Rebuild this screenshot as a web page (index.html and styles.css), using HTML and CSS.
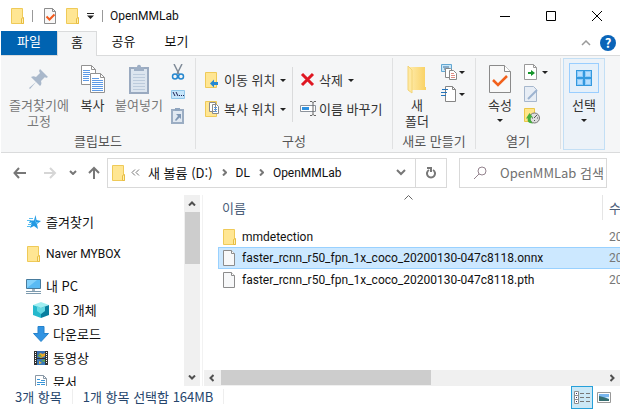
FILE: index.html
```html
<!DOCTYPE html>
<html lang="ko">
<head>
<meta charset="utf-8">
<meta name="viewport" content="width=device-width, initial-scale=1">
<title>OpenMMLab</title>
<link rel="stylesheet" href="styles.css">
</head>
<body>
<svg class="sprite" aria-hidden="true">
  <symbol id="folder" viewBox="0 0 14 16"><path d="M.5.5h11v10h1v5H.5z" fill="#ffe693" stroke="#efca58"/><path d="M10.500 15.500v-5l2-1v6z" fill="#fff0b0" stroke="#e8bd42"/></symbol>
  <symbol id="page" viewBox="0 0 12 16"><path d="M.5.5h8l3 3v12H.5z" fill="#f7f8f9" stroke="#8c8c8c"/><path d="M8.500.5v3h3" fill="#fff" stroke="#8c8c8c"/></symbol>
  <symbol id="caret" viewBox="0 0 6 3"><path d="M0 0h6L3 3z" fill="#222"/></symbol>
  <symbol id="up" viewBox="0 0 8 5"><path d="M1 4.500l3-3 3 3" fill="none" stroke="currentColor" stroke-width="2"/></symbol>
</svg>

<header class="titlebar">
  <svg class="icon-folder" aria-hidden="true"><use href="#folder"/></svg>
  <span class="bar bar-first"></span>
  <button class="quick" aria-label="속성"><svg width="12" height="16" viewBox="0 0 12 16"><path d="M.5.500h8l3 3v12H.5z" fill="#f8f8f8" stroke="#8c8c8c"/><path d="M8.500.500v3h3" fill="none" stroke="#8c8c8c"/><path d="M2.500 8.500l3 3 5-5" fill="none" stroke="#f25a1d" stroke-width="2"/></svg></button>
  <button class="quick" aria-label="새 폴더"><svg class="icon-folder"><use href="#folder"/></svg></button>
  <button class="quick quick-menu" aria-label="빠른 실행 도구 모음"><svg width="7" height="6" viewBox="0 0 7 6"><path d="M0 0h7v1H0zM0 2.500h7L3.500 6z" fill="#222"/></svg></button>
  <span class="bar"></span>
  <h1 class="title">OpenMMLab</h1>
  <div class="controls">
    <button class="control" aria-label="최소화"><svg width="10" height="10"><path d="M0 5.500h10" stroke="#000"/></svg></button>
    <button class="control" aria-label="최대화"><svg width="10" height="10"><path d="M.5.500h9v9h-9z" fill="none" stroke="#000"/></svg></button>
    <button class="control" aria-label="닫기"><svg width="10" height="10"><path d="M0 0l10 10M10 0L0 10" stroke="#000"/></svg></button>
  </div>
</header>

<nav class="tabs" aria-label="리본 탭">
  <button class="tab tab-file">파일</button>
  <button class="tab tab-active">홈</button>
  <button class="tab">공유</button>
  <button class="tab">보기</button>
  <div class="tabs-end">
    <button class="plain" aria-label="리본 최소화"><svg width="10" height="6"><path d="M1 5l4-4 4 4" fill="none" stroke="#9a9a9a" stroke-width="1.500"/></svg></button>
    <button class="help" aria-label="도움말">?</button>
  </div>
</nav>

<section class="ribbon" aria-label="홈">
  <div class="group group-clipboard">
    <div class="tools">
      <button class="big big-pin" disabled><svg width="20" height="30" viewBox="0 0 20 30"><path d="M11 5l8 8-2 1-1-1-4 4c1 3 0 4-1 5l-4-4-6 7-1-1 7-6-5-5c2-1 3-1 5 0l4-4-1-2z" fill="#a9b8cb"/></svg><span>즐겨찾기에<br>고정</span></button>
      <button class="big big-copy"><svg width="26" height="30" viewBox="0 0 26 30"><g fill="#fff" stroke="#929292"><path d="M1.500 1.500h10l4 4v15h-14z"/><path d="M10.500 9.500h10l4 4v15h-14z"/></g><path d="M11.500 1.500v4h4M20.500 9.500v4h4" fill="none" stroke="#929292"/><path d="M3 6.500h7M3 8.500h7M3 10.500h7M3 12.500h6M3 14.500h6M3 16.500h6M12 14.500h7M12 16.500h11M12 18.500h11M12 20.500h11M12 22.500h11M12 24.500h11M12 26.500h11" stroke="#5d9ae6"/></svg><span>복사</span></button>
      <button class="big big-paste" disabled><svg width="20" height="30" viewBox="0 0 20 30"><path d="M1 4h18v25H1z" fill="#dce5ef" stroke="#9aaac0" stroke-width="2"/><path d="M5 3h3c0-3 4-3 4 0h3v4H5z" fill="#9eafc5"/><path d="M4 10.500h12M4 13.500h12M4 16.500h12M4 19.500h12M4 22.500h12M4 25.500h12" stroke="#bccbdc"/></svg><span>붙여넣기</span></button>
      <div class="mini-list">
        <button class="plain" aria-label="잘라내기"><svg width="14" height="16" viewBox="0 0 14 16"><path d="M3 0l5 10M11 0L6 10" fill="none" stroke="#7f8b98" stroke-width="1.500"/><circle cx="4" cy="12.500" r="2.500" fill="none" stroke="#2587cf" stroke-width="1.500"/><circle cx="10" cy="12.500" r="2.500" fill="none" stroke="#2587cf" stroke-width="1.500"/></svg></button>
        <button class="plain" aria-label="경로 복사"><svg width="16" height="16" viewBox="0 0 16 16"><path d="M1.500 4.500h13v8h-13z" fill="#c5e5fa" stroke="#91c7ea"/><path d="M3 6l2 4M6 6l2 4M9 9.500h1M11 9.500h1M13 9.500h1" stroke="#225" /></svg></button>
        <button class="plain" aria-label="바로 가기 붙여넣기" disabled><svg width="14" height="16" viewBox="0 0 14 16"><path d="M1 2h11v13H1z" fill="#e0e8f1" stroke="#9badc3" stroke-width="2"/><path d="M4 0h5v3H4z" fill="#8fa5bf"/><path d="M5 6h5v5L8.500 9.500 5 13 4 12l3-4z" fill="#7f97b4"/></svg></button>
      </div>
    </div>
    <h2 class="group-name">클립보드</h2>
  </div>

  <div class="group group-organize">
    <div class="tools">
      <div class="row-list row-list-split">
        <button class="small"><svg width="16" height="16" viewBox="0 0 16 16"><path d="M.5.500h11v15H.5z" fill="#ffe693" stroke="#efca58"/><path d="M5 11.500l4-4v2.500h4v3H9v2.500z" fill="#2588d2"/></svg>이동 위치<svg class="icon-caret"><use href="#caret"/></svg></button>
        <button class="small"><svg width="16" height="16" viewBox="0 0 16 16"><path d="M.5.500h11v15H.5z" fill="#ffe693" stroke="#efca58"/><path d="M4.500 1.500h6v9h-6zM7.500 3.500h4l2 2v7h-6z" fill="#fff" stroke="#8b8b8b"/><path d="M9 6.500h3M9 8.500h3M9 10.500h3" stroke="#5997df"/></svg>복사 위치<svg class="icon-caret"><use href="#caret"/></svg></button>
      </div>
      <div class="row-list row-list-right">
        <button class="small"><svg width="16" height="16" viewBox="0 0 16 16"><path d="M2 2l11 11M13 2L2 13" stroke="#df1722" stroke-width="3"/></svg>삭제<svg class="icon-caret"><use href="#caret"/></svg></button>
        <button class="small"><svg width="16" height="16" viewBox="0 0 16 16"><path d="M.5 4.500h15v6H.5z" fill="#fff" stroke="#8b929b"/><path d="M2 6h7v3H2z" fill="#2d91e0"/><path d="M10 .5h2l1 1 1-1h2M10 14.500h2l1-1 1 1h2M13 1v13" fill="none" stroke="#666"/></svg>이름 바꾸기</button>
      </div>
    </div>
    <h2 class="group-name">구성</h2>
  </div>

  <div class="group group-new">
    <div class="tools">
      <button class="big big-folder"><svg width="20" height="30" viewBox="0 0 20 30"><defs><linearGradient id="gold"><stop stop-color="#ffedb0"/><stop offset="1" stop-color="#f9d163"/></linearGradient></defs><path d="M1 3h17v20h1v3H1z" fill="url(#gold)"/><path d="M1 2l4 4v23l-4-3z" fill="#ffe9a2" stroke="#f3d477"/></svg><span>새<br>폴더</span></button>
      <div class="mini-list mini-list-pair">
        <button class="plain mini" aria-label="새 항목"><svg width="16" height="16" viewBox="0 0 16 16"><path d="M.5.500h10v7H.5z" fill="#c9e8fa" stroke="#63a7d2"/><path d="M2 3h6M3 5h5" stroke="#456f96"/><path d="M4.500 4.500h5l2 2v7h-7z" fill="#fff" stroke="#888"/><path d="M8.500 6.500h4l3 3v6h-7z" fill="#fff" stroke="#888"/><path d="M10 9.500h3M10 11.500h4M10 13.500h4" stroke="#df8c83"/></svg><svg class="icon-caret"><use href="#caret"/></svg></button>
        <button class="plain mini" aria-label="빠른 연결"><svg width="16" height="16" viewBox="0 0 16 16"><path d="M4.500.500h7l3 3v12h-10z" fill="#fff" stroke="#858585"/><path d="M11.500.500v3h3" fill="none" stroke="#858585"/><path d="M1 3.500h6M0 6.500h6M0 9.500h5" stroke="#2574bb" stroke-width="1"/></svg><svg class="icon-caret"><use href="#caret"/></svg></button>
      </div>
    </div>
    <h2 class="group-name">새로 만들기</h2>
  </div>

  <div class="group group-open">
    <div class="tools">
      <button class="big big-props"><svg width="22" height="30" viewBox="0 0 22 30"><path d="M.5 1.500h15l6 6v21H.5z" fill="#f8f8f8" stroke="#8a8a8a"/><path d="M15.500 1.500v6h6" fill="#fff" stroke="#8a8a8a"/><path d="M4 16l5 5 9-9" fill="none" stroke="#f2611c" stroke-width="2.500"/></svg><span>속성</span><svg class="icon-caret"><use href="#caret"/></svg></button>
      <div class="mini-list mini-list-open">
        <button class="plain mini" aria-label="열기"><svg width="14" height="16" viewBox="0 0 14 16"><path d="M.5.500h9l3 3v12H.5z" fill="#fff" stroke="#999"/><path d="M9.500.500v3h3" fill="none" stroke="#999"/><path d="M4 8h3V6l4 3-4 3v-2H4z" fill="#16962c"/></svg><svg class="icon-caret"><use href="#caret"/></svg></button>
        <button class="plain" aria-label="편집" disabled><svg width="14" height="16" viewBox="0 0 14 16"><path d="M.5.500h9l3 3v12H.5z" fill="#e7edf5" stroke="#a6b7cd"/><path d="M4 13l9-9" stroke="#9cb3d0" stroke-width="2"/></svg></button>
        <button class="plain" aria-label="히스토리"><svg width="16" height="16" viewBox="0 0 16 16"><path d="M.5.500h10v13H.5z" fill="#ffe58a" stroke="#ebc747"/><circle cx="10.500" cy="10" r="5" fill="#dedede" stroke="#777"/><path d="M10 10l3-3M8 10h1M10.500 13v-1M13 10h1" fill="none" stroke="#555"/><path d="M9 15.500c-5 0-6-3-5-5H2L5.500 5 9 9.500H7c-1 2 0 4 2 6z" fill="#47af3c"/></svg></button>
      </div>
    </div>
    <h2 class="group-name">열기</h2>
  </div>

  <button class="select-group"><span class="select-icon"><svg width="16" height="16" viewBox="0 0 16 16"><path d="M0 0h16v16H0z" fill="#3499de"/><path d="M1 1h6v6H1zM9 1h6v6H9zM1 9h6v6H1zM9 9h6v6H9z" fill="#8fcbfa"/><path d="M2 2h4v4H2zM10 2h4v4h-4zM2 10h4v4H2zM10 10h4v4h-4z" fill="#b9dffd"/></svg></span><span>선택</span><svg class="icon-caret"><use href="#caret"/></svg></button>
</section>

<div class="address">
  <button class="plain nav-back" aria-label="뒤로"><svg width="14" height="12"><path d="M13 6H2M6 1L1.500 6 6 11" fill="none" stroke="#777" stroke-width="2"/></svg></button>
  <button class="plain nav-forward" aria-label="앞으로"><svg width="14" height="12"><path d="M1 6h11M7 1l5 5-5 5" fill="none" stroke="#d6d6d6" stroke-width="2"/></svg></button>
  <button class="plain nav-recent" aria-label="최근 위치"><svg width="8" height="5"><path d="M1 1l3 3 3-3" fill="none" stroke="#777" stroke-width="2"/></svg></button>
  <button class="plain nav-up" aria-label="위로"><svg width="12" height="14"><path d="M6 13V2M1 7l5-5 5 5" fill="none" stroke="#777" stroke-width="2"/></svg></button>
  <div class="path">
    <svg class="icon-folder" aria-hidden="true"><use href="#folder"/></svg>
    <svg class="path-more" width="9" height="7" aria-hidden="true"><path d="M4 .5l-3 3 3 3M8 .5l-3 3 3 3" fill="none" stroke="#777"/></svg>
    <a class="crumb" href="#">새 볼륨 (D:)</a>
    <svg class="path-arrow" width="5" height="7" aria-hidden="true"><path d="M1 .5l3 3-3 3" fill="none" stroke="#777" stroke-width="2"/></svg>
    <a class="crumb latin" href="#">DL</a>
    <svg class="path-arrow" width="5" height="7" aria-hidden="true"><path d="M1 .5l3 3-3 3" fill="none" stroke="#777" stroke-width="2"/></svg>
    <a class="crumb latin" href="#">OpenMMLab</a>
    <button class="plain path-open" aria-label="이전 위치"><svg width="10" height="7"><path d="M1 1l4 4 4-4" fill="none" stroke="#777" stroke-width="2"/></svg></button>
    <button class="refresh" aria-label="새로 고침"><svg width="10" height="12"><path d="M7 3a4 4 0 1 1-4 0" fill="none" stroke="#777" stroke-width="2"/><path d="M1 1h4v4" fill="none" stroke="#777" stroke-width="2"/></svg></button>
  </div>
  <label class="search">
    <svg width="13" height="13" aria-hidden="true"><circle cx="8" cy="5" r="4" fill="none" stroke="#94838e"/><path d="M5 8l-5 5" stroke="#94838e"/></svg>
    <input type="text" placeholder="OpenMMLab 검색" aria-label="OpenMMLab 검색">
  </label>
</div>

<main class="panes">
  <aside class="sidebar">
    <ul class="tree">
      <li class="node gap"><svg width="16" height="16" viewBox="0 0 16 16"><path d="M9.500 1l1 5 4.500 1-4 3 1 5-4-3-4 2 1.500-4L3 6.500h5z" fill="#2299e3"/><path d="M9 3v5h4l-3 2z" fill="#6bc5f5"/><path d="M3 4.500h4M1 6.500h4M3 8.500h3M2 10.500h3M1 12.500h4" stroke="#58bdf0"/></svg>즐겨찾기</li>
      <li class="node gap latin"><svg class="icon-folder"><use href="#folder"/></svg>Naver MYBOX</li>
      <li class="node"><svg class="icon-pc" width="17" height="16" viewBox="0 0 17 16"><path d="M1.500 1.500h14v9h-14z" fill="#59baf4" stroke="#477b9d"/><path d="M2 10L12 2H2z" fill="#83d1fb"/><path d="M7 11h3v2H7z" fill="#a5b5c1"/><path d="M1 13.500h15M1 15.500h15" stroke="#7c9aae"/></svg>내 PC</li>
      <li class="node child"><svg width="16" height="16" viewBox="0 0 16 16"><path d="M0 3l8-3 8 3-8 3z" fill="#a0eef1"/><path d="M0 3l8 3v10l-8-3z" fill="#25b9cd"/><path d="M16 3L8 6v10l8-3z" fill="#087f9f"/><path d="M4 4l4 2 4-2v5l-4 3-4-3z" fill="#65d9e3"/></svg>3D 개체</li>
      <li class="node child"><svg width="16" height="16" viewBox="0 0 16 16"><path d="M5 .5h6v7h4.500L8 15.500.5 7.500H5z" fill="#3294e2" stroke="#2582cc"/></svg>다운로드</li>
      <li class="node child"><svg width="16" height="16" viewBox="0 0 16 16"><path d="M1 1h14v14H1z" fill="#333"/><path d="M4 1h8v7H4z" fill="#386fb4"/><path d="M4 9h8v6H4z" fill="#3979ba"/><path d="M7 3l3 1 2-1v3l-4 2-3-2z" fill="#e8a92d"/><path d="M4 6l3-2 2 3zM8 11l4-2v3z" fill="#5fa64b"/><path d="M6 11l3 2-3 1z" fill="#edb941"/><path d="M2.500 2v12M13.500 2v12" stroke="#fff" stroke-dasharray="1 1"/></svg>동영상</li>
      <li class="node child"><svg width="16" height="16" viewBox="0 0 16 16"><path d="M2.500 1.500h8l3 3v10h-11z" fill="#fff" stroke="#8998a6"/><path d="M10.500 1.500v3h3" fill="none" stroke="#8998a6"/><path d="M4 5.500h3M8 6.500h4M4 8.500h8M4 10.500h3M8 10.500h4M4 12.500h8" stroke="#3995d8"/></svg>문서</li>
    </ul>
    <div class="vscroll">
      <svg class="scroll-arrow"><use href="#up"/></svg>
      <div class="vthumb"></div>
      <svg class="scroll-arrow flip"><use href="#up"/></svg>
    </div>
  </aside>

  <section class="files">
    <svg class="sort" width="9" height="5" aria-hidden="true"><path d="M.5 4.500l4-4 4 4" fill="none" stroke="#666"/></svg>
    <div class="list">
      <table class="table">
        <thead><tr><th class="name">이름</th><th class="date">수</th></tr></thead>
        <tbody>
          <tr><td><span class="file"><svg class="icon-folder"><use href="#folder"/></svg>mmdetection</span></td><td class="date">20</td></tr>
          <tr class="selected"><td><span class="file"><svg class="icon-page"><use href="#page"/></svg>faster_rcnn_r50_fpn_1x_coco_20200130-047c8118.onnx</span></td><td class="date">20</td></tr>
          <tr><td><span class="file"><svg class="icon-page"><use href="#page"/></svg>faster_rcnn_r50_fpn_1x_coco_20200130-047c8118.pth</span></td><td class="date">20</td></tr>
        </tbody>
      </table>
    </div>
    <div class="hscroll">
      <svg width="5" height="8"><path d="M4.500 1l-3 3 3 3" fill="none" stroke="#505050" stroke-width="2"/></svg>
      <div class="htrack"><div class="hthumb"></div></div>
      <svg width="5" height="8"><path d="M.5 1l3 3-3 3" fill="none" stroke="#505050" stroke-width="2"/></svg>
    </div>
  </section>
</main>

<footer class="status">
  <span class="status-item">3개 항목</span>
  <span class="status-item status-selected">1개 항목 선택함 164MB</span>
  <div class="views">
    <button class="view view-active" aria-label="자세히"><svg width="17" height="14"><path d="M.5.500h4v12h-4zM.5 4.500h4M.5 8.500h4" fill="#fff" stroke="#8e8e8e"/><path d="M2 2.500h1M2 6.500h1M2 10.500h1" stroke="#337"/><path d="M6 2.500h4M12 2.500h4M6 6.500h4M12 6.500h4M6 10.500h4M12 10.500h4" stroke="#777"/></svg></button>
    <button class="view" aria-label="큰 아이콘"><svg width="14" height="11"><path d="M.5.500h13v10H.5z" fill="#fff" stroke="#999"/><path d="M2 2h10v7H2z" fill="#79b6ef"/><path d="M2 4l4 1 6 2v2H2z" fill="#356e70"/><path d="M8 5h4v2z" fill="#d7effb"/></svg></button>
  </div>
</footer>
</body>
</html>
```
FILE: styles.css
```css
* { box-sizing: border-box; }

body {
  display: flex;
  flex-direction: column;
  height: 100vh;
  margin: 0;
  padding-left: 1px;
  overflow: hidden;
  background: #fff;
  color: #111;
  font: 13px/16px "Noto Sans CJK KR", sans-serif;
}

button, input { font: inherit; color: inherit; }

button {
  display: flex;
  align-items: center;
  justify-content: center;
  padding: 0;
  border: 0;
  background: none;
  white-space: nowrap;
}

svg { display: block; flex: none; }
h1, h2, ul { margin: 0; padding: 0; font-size: 13px; font-weight: inherit; }

.sprite { position: absolute; width: 0; height: 0; }
.icon-folder { width: 14px; height: 16px; }
.icon-page { width: 12px; height: 16px; }
.icon-caret { width: 6px; height: 3px; }

.title, .latin, .table td { font-family: Roboto, "Noto Sans CJK KR", sans-serif; font-size: 12px; }

/* Title bar */
.titlebar { display: flex; align-items: center; flex: none; height: 31px; padding-left: 10px; }
.bar { width: 1px; height: 12px; background: #999; }
.bar-first { margin: 0 11px 0 7px; }
.quick { margin-right: 10px; }
.quick-menu { margin: 0 8px 0 -3px; }
.title { margin-left: 7px; }
.controls { display: flex; align-self: stretch; margin-left: auto; }
.control { width: 46px; }

/* Ribbon tabs */
.tabs { display: flex; flex: none; height: 25px; border-bottom: 1px solid #dadbdc; }
.tab { width: 53px; padding-bottom: 4px; }
.tab-file { width: 56px; background: #0063b1; color: #fff; }
.tab-active { width: 40px; margin-bottom: -1px; border: 1px solid #dadbdc; border-bottom: 0; background: #f5f6f7; }
.tabs-end { display: flex; align-items: center; gap: 9px; margin-left: auto; padding-right: 4px; }
.help { width: 16px; height: 16px; border-radius: 50%; background: #0a64b8; color: #fff; font-weight: 700; }

/* Ribbon */
.ribbon { display: flex; flex: none; height: 97px; padding: 2px 0; border-bottom: 1px solid #dadbdc; background: #f5f6f7; color: #333; }
.group { display: flex; flex-direction: column; flex: none; height: 91px; border-right: 1px solid #e0e1e2; }
.group-clipboard { width: 195px; }
.group-organize { width: 197px; }
.group-new { width: 83px; }
.group-open { width: 85px; }
.group-name { height: 16px; color: #555; text-align: center; white-space: nowrap; }
.tools { display: flex; flex: 1; padding-top: 6px; }
.big { flex-direction: column; justify-content: flex-start; flex: none; }
.big span { margin-top: 3px; line-height: 16px; }
.big .icon-caret { margin-top: 6px; }
.big:disabled { color: #777; }
.big-pin { width: 76px; }
.big-copy { width: 31px; }
.big-paste { width: 62px; }
.mini-list { display: flex; flex-direction: column; align-items: center; gap: 6px; width: 16px; }
.mini-list-pair, .mini-list-open { align-items: flex-start; width: 24px; }
.mini { gap: 2px; }
.mini-list-open .mini { gap: 4px; }
.big-folder { width: 48px; }
.big-props { width: 48px; }
.row-list { display: flex; flex-direction: column; gap: 13px; height: 55px; margin-top: 3px; padding: 5px 0 0 9px; }
.row-list-split { width: 97px; border-right: 1px solid #dadbdc; }
.row-list-right { padding-left: 7px; }
.small { justify-content: flex-start; gap: 3px; }
.small .icon-caret { margin-left: 2px; }
.select-group { flex-direction: column; justify-content: flex-start; width: 42px; height: 92px; margin-left: 2px; padding-top: 4px; border: 1px solid #c3dff5; background: #ecf2f8; }
.select-icon { display: grid; place-items: center; width: 30px; height: 30px; margin-bottom: 4px; border: 1px solid #99ceff; background: #e5f0fa; }
.select-group .icon-caret { margin-top: 6px; }

/* Address bar */
.address { display: flex; align-items: center; flex: none; height: 42px; padding: 0 13px 3px 12px; }
.nav-forward { margin-left: 16px; }
.nav-recent { margin-left: 12px; }
.nav-up { margin-left: 11px; }
.path { display: flex; align-items: center; flex: 1; height: 30px; margin-left: 7px; padding-left: 4px; border: 1px solid #d9d9d9; }
.path-more { margin: 0 8px 0 5px; }
.path-arrow { margin: 0 9px; }
.crumb { color: #111; text-decoration: none; white-space: nowrap; }
.path-open { margin: 0 9px 0 auto; }
.refresh { width: 31px; height: 28px; border-left: 1px solid #d9d9d9; }
.search { display: flex; align-items: center; gap: 13px; flex: none; width: 148px; height: 30px; margin-left: 12px; padding-left: 14px; border: 1px solid #d9d9d9; }
.search input { flex: 1; min-width: 0; padding: 0; border: 0; outline: 0; }
.search input::placeholder { color: #707070; opacity: 1; }

/* Panes */
.panes { display: flex; flex: 1; min-height: 0; }
.sidebar { display: flex; flex: none; width: 202px; padding-right: 2px; border-right: 1px solid #f2f2f2; }
.tree { flex: 1; padding: 15px 0 0 25px; overflow: hidden; list-style: none; }
.node { display: flex; align-items: center; gap: 4px; height: 24px; white-space: nowrap; }
.node .icon-folder { margin: 0 1px; }
.icon-pc { margin-left: -1px; }
.gap { margin-bottom: 8px; }
.child { padding-left: 7px; }
.vscroll { display: flex; flex-direction: column; align-items: center; flex: none; width: 16px; padding: 6px 0; background: #f0f0f0; }
.scroll-arrow { width: 8px; height: 5px; color: #505050; }
.vthumb { width: 15px; height: 52px; margin-top: 6px; background: #cdcdcd; }
.flip { margin-top: auto; transform: rotate(180deg); }

.files { position: relative; display: flex; flex-direction: column; flex: 1; min-width: 0; padding-left: 1px; }
.sort { position: absolute; top: 0; left: 50%; margin-left: -8px; }
.list { flex: 1; min-height: 0; padding-left: 14px; overflow: hidden; }
.table { width: 100%; border-collapse: separate; border-spacing: 0; table-layout: fixed; white-space: nowrap; }
.table th { height: 25px; padding: 0 0 0 4px; color: #4c607a; font-weight: inherit; text-align: left; }
.table td { height: 21px; padding: 0 0 0 5px; border: 0 solid #99d1ff; }
.table tbody::before { content: ""; display: block; height: 6px; }
.table .date { width: 18px; padding-left: 7px; overflow: hidden; color: #777; }
.table th.date { padding-left: 6px; border-left: 1px solid #e5e5e5; color: #4c607a; }
.file { display: flex; align-items: center; gap: 7px; }
.file .icon-folder { margin-right: -2px; }
.table .selected td { height: 22px; border-width: 1px 0; background: #cce8ff; }
.table .selected td:first-child { padding-left: 4px; border-left-width: 1px; }

.hscroll { display: flex; align-items: center; flex: none; height: 16px; padding: 0 5px; background: #f0f0f0; }
.htrack { flex: 1; height: 15px; margin: 0 7px; align-self: flex-start; }
.hthumb { width: 55%; height: 15px; background: #cdcdcd; }

/* Status bar */
.status { display: flex; align-items: center; flex: none; height: 24px; padding-left: 14px; color: #26456c; }
.status-item { margin-bottom: 3px; padding-right: 10px; border-right: 1px solid #eee; line-height: 15px; white-space: nowrap; }
.status-selected { padding-left: 10px; }
.views { display: flex; align-self: stretch; gap: 4px; margin-left: auto; padding: 0 9px 1px 0; }
.view-active { width: 22px; border: 1px solid #26a0da; background: #cbe8f6; }
```
